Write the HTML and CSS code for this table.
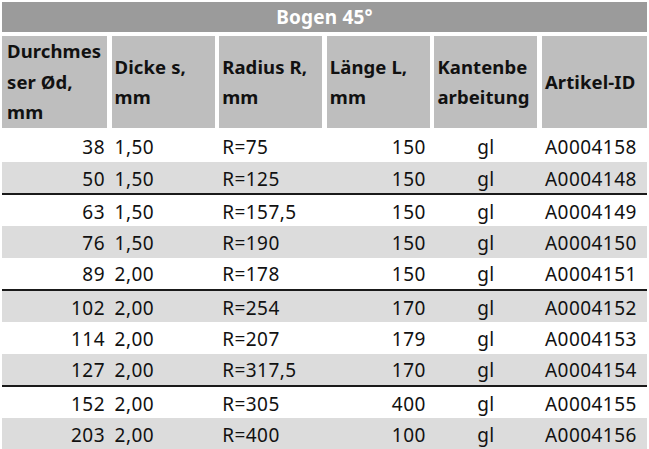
FILE: index.html
```html
<!DOCTYPE html>
<html lang="de">
<head>
<meta charset="utf-8">
<title>Bogen 45°</title>
<link rel="stylesheet" href="styles.css">
</head>
<body>
<div class="sheet">
  <div class="title">Bogen 45°</div>
  <div class="head grid">
    <div class="hc">Durchmes<br>ser Ød,<br>mm</div>
    <div class="hc">Dicke s,<br>mm</div>
    <div class="hc">Radius R,<br>mm</div>
    <div class="hc">Länge L,<br>mm</div>
    <div class="hc">Kantenbe<br>arbeitung</div>
    <div class="hc">Artikel-ID</div>
  </div>
  <div class="rows">
    <div class="row grid"><span class="r">38</span><span>1,50</span><span>R=75</span><span class="r r4">150</span><span class="c">gl</span><span>A0004158</span></div>
    <div class="row grid alt sep"><span class="r">50</span><span>1,50</span><span>R=125</span><span class="r r4">150</span><span class="c">gl</span><span>A0004148</span></div>
    <div class="row grid"><span class="r">63</span><span>1,50</span><span>R=157,5</span><span class="r r4">150</span><span class="c">gl</span><span>A0004149</span></div>
    <div class="row grid alt"><span class="r">76</span><span>1,50</span><span>R=190</span><span class="r r4">150</span><span class="c">gl</span><span>A0004150</span></div>
    <div class="row grid sep"><span class="r">89</span><span>2,00</span><span>R=178</span><span class="r r4">150</span><span class="c">gl</span><span>A0004151</span></div>
    <div class="row grid alt"><span class="r">102</span><span>2,00</span><span>R=254</span><span class="r r4">170</span><span class="c">gl</span><span>A0004152</span></div>
    <div class="row grid"><span class="r">114</span><span>2,00</span><span>R=207</span><span class="r r4">179</span><span class="c">gl</span><span>A0004153</span></div>
    <div class="row grid alt sep"><span class="r">127</span><span>2,00</span><span>R=317,5</span><span class="r r4">170</span><span class="c">gl</span><span>A0004154</span></div>
    <div class="row grid"><span class="r">152</span><span>2,00</span><span>R=305</span><span class="r r4">400</span><span class="c">gl</span><span>A0004155</span></div>
    <div class="row grid alt"><span class="r">203</span><span>2,00</span><span>R=400</span><span class="r r4">100</span><span class="c">gl</span><span>A0004156</span></div>
  </div>
</div>
</body>
</html>
```

FILE: styles.css
```css
html, body {
  margin: 0;
  padding: 0;
  background: #ffffff;
}
body {
  padding: 2px 2px 0 2px;
  font-family: "Noto Sans", "DejaVu Sans", sans-serif;
  color: #111111;
}
.sheet {
  width: 645px;
}
.title {
  height: 30px;
  background: #9b9b9b;
  color: #ffffff;
  font-weight: 700;
  font-size: 19px;
  line-height: 30px;
  text-align: center;
  letter-spacing: 0.2px;
}
.grid {
  display: grid;
  grid-template-columns: 105px 103px 103px 103px 103px 105px;
  column-gap: 4.6px;
}
.head {
  margin-top: 4px;
  height: 92px;
}
.hc {
  background: #bebebe;
  display: flex;
  align-items: center;
  padding: 0 3px;
  font-weight: 700;
  font-size: 18.5px;
  line-height: 30.5px;
  letter-spacing: 0.1px;
  color: #111111;
}
.hc:first-child {
  padding-left: 5px;
}
.rows {
  margin-top: 2.6px;
}
.row {
  height: 31.3px;
  align-items: center;
  font-size: 19px;
  letter-spacing: 0.45px;
  padding-top: 2px;
  box-sizing: border-box;
}
.row span {
  padding-left: 3px;
  white-space: nowrap;
}
.row span.r {
  text-align: right;
  padding-left: 0;
  padding-right: 2px;
}
.row span.r4 {
  padding-right: 4px;
}
.row span.c {
  text-align: center;
  padding-left: 0;
}
.alt {
  background: #dcdcdc;
}
.sep {
  height: 33.3px;
  border-bottom: 2px solid #1a1a1a;
}
```
